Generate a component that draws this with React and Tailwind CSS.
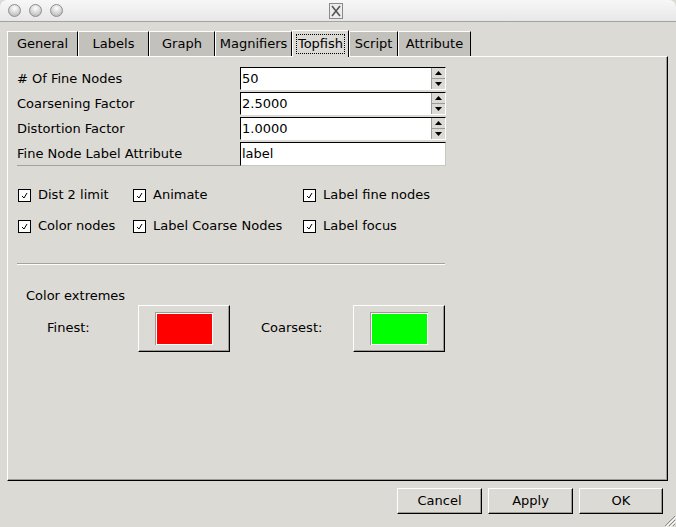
const raised =
  "border-t border-l border-t-white border-l-white border-r border-b border-r-black border-b-black shadow-[inset_-1px_-1px_0_#9d9b95]";

const Spinner = ({ value }) => (
  <div className="flex h-[23px] w-[206px] border-t border-l border-t-black border-l-black border-r border-b border-r-white border-b-white bg-white">
    <div className="flex-1 flex items-center pl-[1px] text-[13px]">{value}</div>
    <div className="flex flex-col w-[14px] bg-[#dcdad5] border-l border-l-[#9d9b95]">
      <div className="flex-1 flex items-center justify-center border-b border-b-[#9d9b95]">
        <svg width="7" height="4" viewBox="0 0 7 4">
          <path d="M0 4 L3.5 0 L7 4 Z" fill="#000" />
        </svg>
      </div>
      <div className="flex-1 flex items-center justify-center">
        <svg width="7" height="4" viewBox="0 0 7 4">
          <path d="M0 0 L3.5 4 L7 0 Z" fill="#000" />
        </svg>
      </div>
    </div>
  </div>
);

const Check = ({ label, className = "" }) => (
  <div className={`flex items-center ${className}`}>
    <div className="w-[13px] h-[13px] ml-[1px] border border-black bg-white flex items-center justify-center">
      <svg width="9" height="9" viewBox="0 0 9 9">
        <path d="M2 5 L4 7 L7 2" stroke="#000" strokeWidth="1" fill="none" />
      </svg>
    </div>
    <span className="ml-[7px]">{label}</span>
  </div>
);

const ColorButton = ({ color }) => (
  <div className={`w-[92px] h-[47px] flex items-center justify-center bg-[#dcdad5] ${raised}`}>
    <div className="border-t border-l border-t-[#9d9b95] border-l-[#9d9b95]">
      <div className={`w-[57px] h-[32px] border border-white ${color}`} />
    </div>
  </div>
);

const tabs = [
  { name: "General", w: "w-[71px]" },
  { name: "Labels", w: "w-[71px]" },
  { name: "Graph", w: "w-[66px]" },
  { name: "Magnifiers", w: "w-[77px]" },
  { name: "Topfish", w: "w-[57px]", active: true },
  { name: "Script", w: "w-[49px]" },
  { name: "Attribute", w: "w-[73px]" },
];

const App = () => {
  return (
    <div className="w-[676px] h-[527px] bg-[#dcdad5] flex flex-col text-black text-[13px] font-['DejaVu_Sans',sans-serif] overflow-hidden">
      {/* title bar */}
      <div className="h-[22px] flex items-center relative rounded-t-[7px] border-b border-b-[#a3a29e] bg-gradient-to-b from-[#f7f7f7] to-[#e7e7e7]">
        <div className="flex gap-[8px] ml-[8px] -mt-[1px]">
          {[0, 1, 2].map((i) => (
            <div
              key={i}
              className="w-[13px] h-[13px] rounded-full border border-[#8e8e8e] bg-[radial-gradient(circle_at_50%_30%,#ffffff,#cfcfcf_60%,#a9a9a9)]"
            />
          ))}
        </div>
        <div className="absolute left-[329px] top-[3px]">
          <svg width="14" height="16" viewBox="0 0 14 16">
            <rect x="0.5" y="0.5" width="13" height="15" fill="#ececec" stroke="#8a8a8a" />
            <path d="M3 3 L11 13 M11 3 L3 13" stroke="#555" strokeWidth="1.6" />
          </svg>
        </div>
      </div>

      <div className="pl-[7px] pr-[8px]">
        {/* tabs */}
        <div className="flex items-end h-[34px]">
          {tabs.map((t) =>
            t.active ? (
              <div
                key={t.name}
                className={`${t.w} h-[27px] bg-[#dcdad5] border-t border-l border-t-white border-l-white border-r border-r-black -mb-[1px] relative z-10 flex items-center justify-center`}
              >
                <span className="border border-dotted border-black px-[1px] h-[20px] flex items-center">
                  {t.name}
                </span>
              </div>
            ) : (
              <div
                key={t.name}
                className={`${t.w} h-[25px] bg-[#c3c1bc] border-t border-l border-t-white border-l-white border-r border-r-black flex items-center justify-center`}
              >
                {t.name}
              </div>
            )
          )}
        </div>

        {/* panel */}
        <div className="h-[425px] border-t border-l border-t-white border-l-white border-r border-b border-r-black border-b-black shadow-[inset_-1px_-1px_0_#9d9b95] pl-[9px] pt-[10px]">
          <div className="flex flex-col gap-[2px]">
            <div className="flex items-center">
              <div className="w-[223px]"># Of Fine Nodes</div>
              <Spinner value="50" />
            </div>
            <div className="flex items-center">
              <div className="w-[223px]">Coarsening Factor</div>
              <Spinner value="2.5000" />
            </div>
            <div className="flex items-center">
              <div className="w-[223px]">Distortion Factor</div>
              <Spinner value="1.0000" />
            </div>
            <div className="flex items-center">
              <div className="w-[223px] h-[23px] flex items-center border-b border-b-[#a3a29e]">
                Fine Node Label Attribute
              </div>
              <div className="w-[206px] h-[24px] bg-white border-t border-l border-t-black border-l-black border-r border-b border-r-[#c9c7c2] border-b-[#c9c7c2] flex items-center pl-[1px]">
                label
              </div>
            </div>
          </div>

          <div className="mt-[21px] flex flex-col gap-[15px]">
            <div className="flex h-[16px]">
              <Check label="Dist 2 limit" className="w-[115px]" />
              <Check label="Animate" className="w-[170px]" />
              <Check label="Label fine nodes" />
            </div>
            <div className="flex h-[16px]">
              <Check label="Color nodes" className="w-[115px]" />
              <Check label="Label Coarse Nodes" className="w-[170px]" />
              <Check label="Label focus" />
            </div>
          </div>

          <div className="mt-[29px] w-[428px] border-t border-t-[#a3a29e] border-b border-b-white" />

          <div className="mt-[21px] ml-[9px]">Color extremes</div>
          <div className="-mt-[1px] flex items-center">
            <div className="w-[121px] pl-[30px]">Finest:</div>
            <ColorButton color="bg-[#ff0000]" />
            <div className="w-[123px] pl-[31px]">Coarsest:</div>
            <ColorButton color="bg-[#00ff00]" />
          </div>
        </div>
      </div>

      {/* bottom buttons */}
      <div className="flex justify-end gap-[6px] pr-[13px] mt-[7px] relative">
        <button className={`w-[85px] h-[26px] bg-[#dcdad5] ${raised}`}>Cancel</button>
        <button className={`w-[85px] h-[26px] bg-[#dcdad5] ${raised}`}>Apply</button>
        <button className={`w-[84px] h-[26px] bg-[#dcdad5] ${raised}`}>OK</button>
        <div className="absolute right-0 top-[26px]">
          <svg width="13" height="13" viewBox="0 0 13 13">
            <path d="M12 2 L2 12 M12 6 L6 12 M12 10 L10 12" stroke="#8e8c86" strokeWidth="1" />
            <path d="M13 3 L3 13 M13 7 L7 13" stroke="#ffffff" strokeWidth="1" />
          </svg>
        </div>
      </div>
    </div>
  );
};

export default App;
